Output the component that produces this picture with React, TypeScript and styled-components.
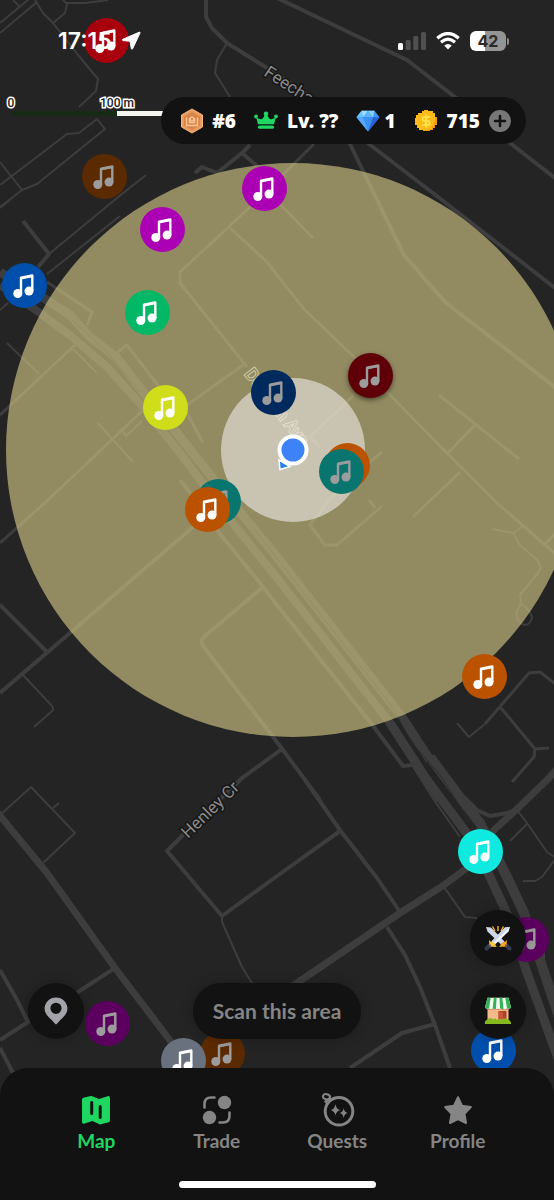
import React from "react";
import styled, { createGlobalStyle, css } from "styled-components";

const GlobalStyle = createGlobalStyle`
  *, *::before, *::after { box-sizing: border-box; }
  body { margin: 0; background: #121212; }
  button { font: inherit; color: inherit; border: 0; padding: 0; background: none; cursor: pointer; }
`;

const Screen = styled.div`
  position: relative;
  display: flex;
  flex-direction: column;
  min-height: 100vh;
  overflow: hidden;
  background: #242424;
  color: #fff;
  font-family: Lato, "Open Sans", sans-serif;
`;

/* ---------- map canvas ---------- */

const MapCanvas = styled.main`
  position: absolute;
  inset: 0;
  overflow: hidden;
`;

const MapDrawing = styled.svg`
  display: block;
  width: 100%;
  height: 100%;
`;

const PinButton = styled.button<{ $x: number; $y: number; $color: string; $dim?: boolean; $raised?: boolean }>`
  position: absolute;
  left: calc(50% + ${(p) => p.$x - 277}px);
  top: ${(p) => p.$y}px;
  width: 45px;
  height: 45px;
  margin: -23px 0 0 -23px;
  border-radius: 50%;
  background: ${(p) => p.$color};
  color: ${(p) => (p.$dim ? "#9c9c9c" : "#fff")};
  ${(p) => p.$raised && css`box-shadow: 0 2px 5px rgba(0, 0, 0, 0.5);`}

  svg { display: block; width: 45px; height: 45px; }
`;

const Scale = styled.div`
  position: absolute;
  left: 11px;
  top: 96px;
  width: 212px;
`;

const ScaleLabels = styled.div`
  display: flex;
  height: 15px;
  font: 700 12px/15px Roboto, sans-serif;
  color: #222;
  -webkit-text-stroke: 3px #fff;
  paint-order: stroke fill;

  span { width: 106px; }
  span > b { display: inline-block; font-weight: 500; transform: translateX(-50%); white-space: nowrap; }
`;

const ScaleBar = styled.div`
  display: flex;
  height: 5px;
  background: #f6f6f1;

  &::before { content: ""; width: 50%; background: #172a16; }
`;

/* ---------- top overlay ---------- */

const StatusBar = styled.div`
  position: relative;
  display: flex;
  align-items: center;
  justify-content: space-between;
  height: 82px;
  padding: 0 45px 0 58px;
`;

const StatusGroup = styled.div<{ $gap: number }>`
  display: flex;
  align-items: center;
  gap: ${(p) => p.$gap}px;

  svg { display: block; }
`;

const Clock = styled.time`
  font: 600 23px/28px Inter, sans-serif;
`;

const Battery = styled.div`
  display: flex;
  align-items: center;
  gap: 1px;

  &::after { content: ""; width: 2px; height: 7px; border-radius: 0 2px 2px 0; background: #8e8e8e; }
`;

const BatteryLevel = styled.span`
  width: 36px;
  height: 20px;
  border-radius: 6px;
  background: linear-gradient(90deg, #fff 42%, #949494 42%);
  color: #2a2a2a;
  font: 700 16px/20px Inter, sans-serif;
  text-align: center;
`;

const Hud = styled.header`
  position: relative;
  display: flex;
  align-self: flex-end;
  align-items: center;
  gap: 18px;
  height: 47px;
  margin: 15px 28px 0 0;
  padding: 0 15px 0 20px;
  border-radius: 24px;
  background: #121212;
`;

const Stat = styled.div<{ $gap: number }>`
  display: flex;
  align-items: center;
  gap: ${(p) => p.$gap}px;
  font: 900 19px/24px "Noto Sans", sans-serif;
  white-space: nowrap;

  svg { display: block; }
`;

const AddButton = styled.button`
  width: 22px;
  height: 22px;
  border-radius: 50%;
  background: #777;
  color: #121212;
`;

/* ---------- bottom overlay ---------- */

const Controls = styled.div`
  position: relative;
  display: grid;
  grid-template-columns: 1fr auto 1fr;
  align-items: end;
  margin-top: auto;
  padding: 0 28px 29px;
`;

const ControlStack = styled.div`
  display: flex;
  flex-direction: column;
  justify-self: end;
  gap: 17px;
`;

const RoundButton = styled.button`
  display: grid;
  place-items: center;
  width: 56px;
  height: 56px;
  border-radius: 50%;
  background: #121212;
  box-shadow: 0 0 12px rgba(0, 0, 0, 0.25);
`;

const ScanButton = styled.button`
  height: 56px;
  padding: 0 20px;
  border-radius: 28px;
  background: #121212;
  box-shadow: 0 0 12px rgba(0, 0, 0, 0.25);
  color: #858585;
  font: 700 21px/24px Lato, sans-serif;
`;

const BottomBar = styled.footer`
  position: relative;
  height: 132px;
  padding-top: 26px;
  border-radius: 28px 28px 0 0;
  background: #121212;
`;

const Tabs = styled.nav`
  display: flex;
  padding: 0 36px;
`;

const Tab = styled.a<{ $active?: boolean }>`
  display: flex;
  flex: 1;
  flex-direction: column;
  align-items: center;
  gap: 3px;
  color: ${(p) => (p.$active ? "#1ed760" : "#858585")};
  font: 700 19px/24px Lato, sans-serif;
  text-decoration: none;

  svg { display: block; overflow: visible; }
`;

const HomeIndicator = styled.div`
  width: 197px;
  height: 7px;
  margin: 28px auto 0;
  border-radius: 4px;
  background: #fff;
`;

/* ---------- data ---------- */

type Road = [width: number, path: string];

const roads: Road[] = [
  [2, "M0 23L28 0M0 33L37 2M13 0L20 7"],
  [2, "M35 0L43 13L53 23L78 55L98 79L96 91L79 107"],
  [2, "M53 23L65 13L67 4L63 0M67 3L85 3L108 0"],
  [2, "M0 185L67 134L79 133L97 119L105 129L37 184L22 190L0 207M0 162L22 190"],
  [2, "M146 175L117 198L49 254M120 216L47 274M10 200L0 208M0 310L8 303"],
  [4, "M23 221L49 254L38 267"],
  [9, "M0 272L47 300L70 315L90 337L117 358L147 397L177 433L222 490L277 557L402 717L430 760"],
  [10, "M430 757L462 800L480 823L507 877L524 913L540 960L560 1020"],
  [8, "M0 285L40 313L72 337L107 367L143 407L180 453L227 516L277 578L390 723L440 800"],
  [9, "M390 723L427 780L474 843L490 877L510 920L525 967L560 1064"],
  [4, "M180 480L192 495L217 530L263 587L277 605L374 727L403 766L412 765"],
  [2, "M412 765L434 800L460 837M429 778L470 838"],
  [4, "M464 797L477 810L490 816L507 813L516 810"],
  [7, "M250 1015L297 983L400 913L444 885L467 868L494 830L516 810L547 780L560 766"],
  [4, "M305 780L340 830L377 878L400 912"],
  [4, "M263 587L205 636Q200 640 203 646L277 742L320 800"],
  [4, "M282 749L242 778L183 835L167 851L222 916L277 876L340 831"],
  [2, "M222 916L222 922L242 967L252 983"],
  [4, "M387 927L405 955L420 987L435 1025L450 1068M435 1024L402 1033L350 1068"],
  [2, "M444 887L465 917L477 918"],
  [2, "M517 810L527 823L547 852L556 858L542 877L535 881L523 881M527 824L510 841M517 899L521 900L529 918M540 955L544 960L544 945"],
  [7, "M-4 811L47 873L115 968L172 1043L195 1075"],
  [2, "M0 815L31 787L75 833L43 863M53 808L59 803"],
  [4, "M115 968L78 992L28 1022L0 1040M0 970L17 1000L28 1022M0 1048L13 1073"],
  [4, "M0 605L47 652M0 693L70 633L193 527"],
  [2, "M23 675L52 706Q54 709 52 711L34 727"],
  [3, "M0 543L48 500L122 430L143 410M0 415L77 343"],
  [2, "M98 423L133 462M122 430L126 436L142 421M7 343L39 374M72 348L97 373"],
  [3, "M47 282L92 312L87 325M115 354L127 345L160 388L187 413L203 443"],
  [3, "M187 405L243 365M247 367L180 283V272L250 207L314 144"],
  [3, "M230 228L267 262L277 275L305 310L354 357L390 395L447 453L497 503L560 558"],
  [3, "M265 189L313 238M439 395L519 459M475 425L448 453M460 472L413 517"],
  [4, "M310 97L350 144L377 200L404 255L445 302L560 391"],
  [4, "M350 130L369 144L442 200L560 292"],
  [4, "M277 -2L407 60L455 97L510 143L560 182"],
  [4, "M206 -2V17L212 28L227 43L267 68L310 97"],
  [2, "M227 43L217 60L215 73L230 97"],
  [4, "M195 173L202 167L217 173L242 153L250 145M242 153L257 166"],
  [3, "M354 395L310 437L320 447M382 452L370 462L329 500L310 525L325 545H337L382 506M369 500L375 508"],
  [2, "M492 529L513 533L522 527M513 533L520 545L537 560Q543 568 538 573L520 595L521 603L517 611Q515 620 522 624Q529 627 532 618Q531 610 521 604"],
  [3, "M544 545L556 533"],
  [2, "M457 723L469 737L485 724"],
  [3, "M485 724L529 673L540 672L558 686M501 708L535 749L549 748M535 749L534 757L512 782"],
];

interface PinData {
  x: number;
  y: number;
  color: string;
  dim?: boolean;
  raised?: boolean;
}

const pins: PinData[] = [
  { x: 107, y: 41, color: "#a8000c" },
  { x: 105, y: 177, color: "#5c2a00", dim: true },
  { x: 265, y: 189, color: "#ab00b3" },
  { x: 163, y: 230, color: "#ab00b3" },
  { x: 25, y: 286, color: "#004fac" },
  { x: 148, y: 313, color: "#02b866" },
  { x: 166, y: 408, color: "#cfdd1b" },
  { x: 274, y: 393, color: "#002a5e", dim: true },
  { x: 371, y: 376, color: "#5f0009", dim: true, raised: true },
  { x: 348, y: 466, color: "#bb5200" },
  { x: 342, y: 472, color: "#08766f", dim: true },
  { x: 219, y: 502, color: "#08766f", dim: true },
  { x: 208, y: 510, color: "#bb5200" },
  { x: 485, y: 677, color: "#bb5200" },
  { x: 481, y: 852, color: "#10e9df" },
  { x: 527, y: 940, color: "#5c0060", dim: true },
  { x: 108, y: 1024, color: "#5c0060", dim: true },
  { x: 223, y: 1054, color: "#5c2a00", dim: true },
  { x: 184, y: 1061, color: "#69717e" },
  { x: 494, y: 1051, color: "#004fac" },
];

/* ---------- icons ---------- */

const NoteIcon = () => (
  <svg viewBox="-22.5 -22.5 45 45" fill="currentColor" aria-hidden="true">
    <circle cx="-6.700" cy="8" r="4.500" />
    <circle cx="4.500" cy="5.600" r="4.500" />
    <path d="M-3.500 8V-7.800L7.800-10V5.500" fill="none" stroke="currentColor" strokeWidth="2.400" strokeLinejoin="round" />
    <path d="M-3.500-8.200L7.800-10.400V-8.200L-3.500-6Z" />
  </svg>
);

const ArrowIcon = () => (
  <svg width="20" height="20" viewBox="0 0 20 20" fill="#fff" aria-hidden="true">
    <path d="M18.200 1.200L1.800 8.300Q.6 9 2 9.600L9 10.200L10.300 17.600Q10.800 19 11.600 17.700L19 2Q19.300.8 18.200 1.200Z" stroke="#fff" strokeWidth="1" strokeLinejoin="round" />
  </svg>
);

const SignalIcon = () => (
  <svg width="28" height="18" viewBox="0 0 28 18" fill="#505050" aria-hidden="true">
    <rect x="0" y="11" width="5" height="7" rx="1.500" fill="#fff" />
    <rect x="7.700" y="8" width="5" height="10" rx="1.500" />
    <rect x="15.300" y="4" width="5" height="14" rx="1.500" />
    <rect x="23" y="0" width="5" height="18" rx="1.500" />
  </svg>
);

const WifiIcon = () => (
  <svg width="24" height="18" viewBox="0 0 24 18" fill="none" stroke="#fff" strokeWidth="3.200" aria-hidden="true">
    <path d="M1.300 6.300Q12-3.200 22.700 6.300M5 10.200Q12 4 19 10.200" />
    <path d="M8.200 13.500Q12 10.300 15.800 13.500L12 17.500Z" fill="#fff" stroke="none" />
  </svg>
);

const BadgeIcon = () => (
  <svg width="22" height="26" viewBox="1 0 22 26" aria-hidden="true">
    <path d="M12 1L22.500 7V19L12 25L1.500 19V7Z" fill="#e99a5c" stroke="#f6b77e" strokeWidth="1" strokeLinejoin="round" />
    <path d="M12 4L20 8.600V17.400L12 22L4 17.400V8.600Z" fill="#d9854a" />
    <path d="M6.500 9.500V17.500H17.500V9.500M9.500 10V14.500H14.500V10" fill="none" stroke="#fac695" strokeWidth="1.400" />
    <circle cx="12" cy="11" r="1.800" fill="none" stroke="#fac695" strokeWidth="1.200" />
  </svg>
);

const CrownIcon = () => (
  <svg width="24" height="19" viewBox="0.500 0 25 20" fill="#1ed760" aria-hidden="true">
    <path d="M4.600 14L2.800 7L7.500 8.800Q10 9 12 3.500H14Q16 9 18.500 8.800L23.200 7L21.400 14Z" />
    <circle cx="2.500" cy="5.800" r="2" />
    <circle cx="13" cy="3" r="2.400" />
    <circle cx="23.500" cy="5.800" r="2" />
    <rect x="4.500" y="15.200" width="17" height="3.600" rx="1.800" />
  </svg>
);

const DiamondIcon = () => (
  <svg width="24" height="22" viewBox="0 0 24 22" aria-hidden="true">
    <path d="M5.500.8H18.500L23.500 7.200L12 21.500L.5 7.200Z" fill="#3f95f5" />
    <path d="M5.500.8L.5 7.200H7Z" fill="#6ec4fb" />
    <path d="M5.500.8H12L7 7.200Z" fill="#9addff" />
    <path d="M12 .8L17 7.200H7Z" fill="#5cb4fb" />
    <path d="M12 .8H18.500L17 7.200Z" fill="#8dd2ff" />
    <path d="M7 7.200H17L12 21.500Z" fill="#3d8ff2" />
    <path d="M17 7.200H23.500L12 21.500Z" fill="#2764d6" />
    <path d="M.5 7.200H7L12 21.500Z" fill="#56a9f8" />
  </svg>
);

const CoinIcon = () => (
  <svg width="24" height="22" viewBox="0 0 24 22" aria-hidden="true">
    <path d="M8 1H10V0H14V1H19V3H21V7H23V15H21V18H19V20H16V21H9V20H5V18H3V15H1V8H2V5H4V3H8Z" fill="#fdbb17" />
    <path d="M21 7H23V15H21V18H19V20H16V21H9V20H14V19H18V16H20V12H21Z" fill="#f39c0c" />
    <path d="M16 7H10.500Q8.500 7 8.500 9T10.500 11H13.500Q15.500 11 15.500 13T13.500 15H8M12 4.500V17.500" fill="none" stroke="#ffe24a" strokeWidth="2" />
  </svg>
);

const PinIcon = () => (
  <svg width="24" height="28" viewBox="0 0 24 28" aria-hidden="true">
    <path fillRule="evenodd" fill="#a3a3aa" d="M12 .5A11.300 11.300 0 0 0 .6 11.800C.6 16.500 4 19.500 7.500 22.800L11 26.700Q12 27.700 13 26.700L16.500 22.800C20 19.500 23.400 16.500 23.400 11.800A11.300 11.300 0 0 0 12 .5ZM12 5.700A5.600 5.600 0 1 1 12 16.900A5.600 5.600 0 0 1 12 5.700Z" />
  </svg>
);

const SwordsIcon = () => (
  <svg width="28" height="26" viewBox="0 0 28 26" aria-hidden="true">
    <path d="M14 1V6M8.500 1.500L11 6M19.500 1.500L17 6" stroke="#f6b51e" strokeWidth="1.400" />
    <path d="M5.500 20.500L2.500 23.500M22.500 20.500L25.500 23.500" stroke="#343850" strokeWidth="4" strokeLinecap="round" />
    <path d="M2 2L7 2.500L20.500 16.500L17 19.500L3.500 6.500Z" fill="#cfd6ea" />
    <path d="M26 2L21 2.500L7.500 16.500L11 19.500L24.500 6.500Z" fill="#f1f4ff" />
    <path d="M21 2.500L7.500 16.500L9 18L26 2Z" fill="#cbd3ea" />
    <path d="M5 14.500Q5.500 16.500 8 17L11 18.500Q11.500 21 13 22L5.500 21.500Z" fill="#ffc832" />
    <path d="M23 14.500Q22.500 16.500 20 17L17 18.500Q16.500 21 15 22L22.500 21.500Z" fill="#f6a623" />
    <path d="M4.500 21L7 21.500L6.500 19Z" fill="#454a66" />
    <path d="M23.500 21L21 21.500L21.500 19Z" fill="#454a66" />
  </svg>
);

const ShopIcon = () => (
  <svg width="28" height="28" viewBox="0 0 28 28" aria-hidden="true">
    <rect x="3.500" y="9" width="21" height="16" fill="#f6b98a" />
    <rect x="3.500" y="9" width="21" height="4" fill="#dd8f65" />
    <rect x="14.500" y="14" width="8" height="9" fill="#a9432a" />
    <path d="M14.500 23V14L19 15.500V23Z" fill="#c9583a" />
    <path d="M3.500.8H24.500L27 10.500Q25.500 12.500 23 11.500Q21 13 18.700 11.500Q16.500 13 14 11.500Q11.500 13 9.300 11.500Q7 13 5 11.500Q2.500 12.500 1 10.500Z" fill="#f4fff3" />
    <path d="M3.500.8H6.700L5 11.500Q2.500 12.500 1 10.500ZM9.800.8H12.600L12 11.800Q10.500 12.300 8.700 11.500ZM15.500.8H18.300L19.500 11.800Q17.500 12.300 16 11.500ZM21.300.8H24.500L27 10.500Q25.500 12.500 23 11.500Z" fill="#36b254" />
    <path d="M1 27Q0 23.500 3.500 22.500Q6 19.500 9 22.300Q11 20.500 13 23Q15.500 21 18 22.700Q21 20 23.500 22.500Q27.500 23.500 27 27Z" fill="#85b91f" />
  </svg>
);

const MapTabIcon = () => (
  <svg width="32" height="32" viewBox="0 0 32 32" aria-hidden="true">
    <path d="M2 5.500Q2 4.200 3.300 3.800L10.800 2Q11.500 1.800 12.200 2.200L19 5L27.500 2.200Q30 1.600 30 4V26.500Q30 27.800 28.700 28.300L21 30.300Q20.200 30.500 19.500 30.200L12.500 27L4.500 29.600Q2 30.300 2 28Z" fill="currentColor" />
    <path d="M11.700 8.500V19.500M20.200 12.500V23.500" stroke="#121212" strokeWidth="3" strokeLinecap="round" />
  </svg>
);

const TradeIcon = () => (
  <svg width="32" height="32" viewBox="0 0 32 32" fill="currentColor" aria-hidden="true">
    <circle cx="23.500" cy="8.500" r="6.700" />
    <circle cx="8.500" cy="23.500" r="6.700" />
    <path d="M3.500 13.500V10Q3.500 3.500 10 3.500H13.500M28.500 18.500V22Q28.500 28.500 22 28.500H18.500" fill="none" stroke="currentColor" strokeWidth="2.600" strokeLinecap="round" />
  </svg>
);

const QuestsIcon = () => (
  <svg width="34" height="32" viewBox="0 0 34 32" fill="currentColor" aria-hidden="true">
    <g fill="none" stroke="currentColor">
      <circle cx="19" cy="17.200" r="13.800" strokeWidth="3" />
      <ellipse cx="6.500" cy="2.800" rx="3.600" ry="2.600" transform="rotate(15 6.500 2.800)" strokeWidth="2" />
      <path d="M4.800 8.500L10.500 3.500" strokeWidth="2.400" />
    </g>
    <path d="M15.500 10Q16.100 15.500 20.500 16Q16.100 17 15.500 21.500Q14.700 17 10.500 16Q14.700 15.500 15.500 10Z" />
    <path d="M23.700 14Q24.300 18.500 28 19Q24.300 19.700 23.700 24Q23 19.700 19.500 19Q23 18.500 23.700 14Z" />
  </svg>
);

const StarIcon = () => (
  <svg width="32" height="32" viewBox="0 0 32 32" aria-hidden="true">
    <path d="M16 3.200L20 11.700L28.800 13L22.500 19.800L24 29L16 25L8 29L9.500 19.800L3.200 13L12 11.700Z" fill="currentColor" stroke="currentColor" strokeWidth="2" strokeLinejoin="round" />
  </svg>
);

/* ---------- sections ---------- */

const CityMap = () => (
  <MapDrawing role="img" aria-label="Street map">
    <svg x="50%" overflow="visible">
      <g transform="translate(-277 0)">
        <g fill="none" stroke="#3d3d3d" strokeLinejoin="round">
          {roads.map(([width, path]) => (
            <path key={path} d={path} strokeWidth={width} />
          ))}
        </g>
        <path d="M72 320L107 352L140 392M255 530L392 707L412 743L440 775L470 822" fill="none" stroke="#2b2b2b" strokeWidth="1" />
        <g fontFamily="Roboto, sans-serif" fontSize="17" fill="#8a8a8a" stroke="#161616" strokeWidth="3" paintOrder="stroke">
          <text transform="translate(263 75) rotate(33)">Feecham</text>
          <text transform="translate(188 839) rotate(-44)">Henley Cr</text>
        </g>
        <circle cx="293" cy="450" r="287" fill="#dcd08a" fillOpacity="0.6" />
        <text
          transform="translate(244 374) rotate(52)"
          fontFamily="Roboto, sans-serif"
          fontSize="17"
          fill="#938d6b"
          stroke="#d0cb9f"
          strokeWidth="2"
          paintOrder="stroke"
        >
          Dorman Ave
        </text>
        <circle cx="293" cy="450" r="72" fill="#eee9e6" fillOpacity="0.6" />
      </g>
    </svg>
  </MapDrawing>
);

const LocationDot = styled.div`
  position: absolute;
  left: calc(50% + 16px);
  top: 450px;
  margin: -16px 0 0 -16px;

  svg { display: block; overflow: visible; }
`;

export default function App() {
  return (
    <Screen>
      <GlobalStyle />
      <MapCanvas>
        <CityMap />
        <Scale>
          <ScaleLabels>
            <span><b>0</b></span>
            <span><b>100 m</b></span>
          </ScaleLabels>
          <ScaleBar />
        </Scale>
        {pins.map((pin) => (
          <PinButton
            key={`${pin.x}-${pin.y}`}
            type="button"
            aria-label="Song"
            $x={pin.x}
            $y={pin.y}
            $color={pin.color}
            $dim={pin.dim}
            $raised={pin.raised}
          >
            <NoteIcon />
          </PinButton>
        ))}
        <LocationDot>
          <svg width="32" height="32" viewBox="0 0 32 32" aria-hidden="true">
            <path d="M2 26L3 35.500L13 32.500Z" fill="#2680ee" stroke="#fff" strokeWidth="1.500" />
            <circle cx="16" cy="16" r="13.500" fill="#3e82f7" stroke="#fff" strokeWidth="4" />
          </svg>
        </LocationDot>
      </MapCanvas>

      <StatusBar>
        <StatusGroup $gap={9}>
          <Clock>17:15</Clock>
          <ArrowIcon />
        </StatusGroup>
        <StatusGroup $gap={10}>
          <SignalIcon />
          <WifiIcon />
          <Battery>
            <BatteryLevel>42</BatteryLevel>
          </Battery>
        </StatusGroup>
      </StatusBar>

      <Hud>
        <Stat $gap={9}>
          <BadgeIcon />
          #6
        </Stat>
        <Stat $gap={9}>
          <CrownIcon />
          Lv. ??
        </Stat>
        <Stat $gap={4}>
          <DiamondIcon />1
        </Stat>
        <Stat $gap={9}>
          <CoinIcon />
          715
          <AddButton type="button" aria-label="Add coins">
            <svg width="22" height="22" viewBox="0 0 22 22" aria-hidden="true">
              <path d="M11 6V16M6 11H16" stroke="currentColor" strokeWidth="2.500" strokeLinecap="round" />
            </svg>
          </AddButton>
        </Stat>
      </Hud>

      <Controls>
        <RoundButton type="button" aria-label="My location">
          <PinIcon />
        </RoundButton>
        <ScanButton type="button">Scan this area</ScanButton>
        <ControlStack>
          <RoundButton type="button" aria-label="Battle">
            <SwordsIcon />
          </RoundButton>
          <RoundButton type="button" aria-label="Shop">
            <ShopIcon />
          </RoundButton>
        </ControlStack>
      </Controls>

      <BottomBar>
        <Tabs>
          <Tab href="#map" $active aria-current="page">
            <MapTabIcon />
            Map
          </Tab>
          <Tab href="#trade">
            <TradeIcon />
            Trade
          </Tab>
          <Tab href="#quests">
            <QuestsIcon />
            Quests
          </Tab>
          <Tab href="#profile">
            <StarIcon />
            Profile
          </Tab>
        </Tabs>
        <HomeIndicator />
      </BottomBar>
    </Screen>
  );
}
